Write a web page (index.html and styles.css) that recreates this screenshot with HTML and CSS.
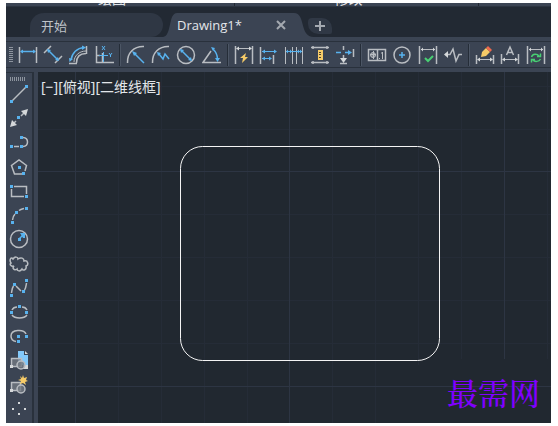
FILE: index.html
```html
<!DOCTYPE html>
<html lang="zh-CN">
<head>
<meta charset="utf-8">
<title>Drawing1</title>
<link rel="stylesheet" href="styles.css">
</head>
<body>
<div class="app">
  <div class="ribbon"><span class="panel first">绘图</span><span class="panel">修改</span><span class="panel last"></span></div>
  <nav class="tabs">
    <button class="tab start">开始</button>
    <div class="tab active">
      <svg class="edge left" viewBox="0 0 14 30"><path d="M0 30C9 29 5 6 14 6V30Z"/></svg>
      <button class="title">Drawing1*</button>
      <button class="close" aria-label="关闭"><svg viewBox="0 0 10 10"><path d="M1 1L9 9M9 1L1 9"/></svg></button>
      <svg class="edge right" viewBox="0 0 20 30"><path d="M0 6C12 6 5 30 20 30H0Z"/></svg>
    </div>
    <button class="add" aria-label="新建"><svg viewBox="0 0 10 10"><path d="M5 0V10M0 5H10"/></svg></button>
  </nav>
  <div class="toolbar">
    <i class="grip"></i>
    <div class="tools">
      <button aria-label="线性"><svg viewBox="0 0 20 20"><path d="M1.500 2V18M18.500 2V18"/><path class="b" d="M3 6.500H17"/><path class="bf" d="M2 6.500L5 4.500V8.500ZM18 6.500L15 4.500V8.500Z"/></svg></button>
      <button aria-label="对齐"><svg viewBox="0 0 20 20"><path d="M1 8L8 1M12 18L19 11"/><path class="b" d="M5 5L15 15"/><path class="bf" d="M4 4L8 5L5 8ZM16 16L12 15L15 12Z"/></svg></button>
      <button aria-label="弧长"><svg viewBox="0 0 20 20"><path d="M18.500 1V9M1 18.500H9M8.500 18C8.500 12 12 8.500 18 8.500"/><path class="thin" d="M6 17C6 11 11 6 18 6"/><path class="b" d="M3 15C4 8 9 3 16 2.500"/><path class="bf" d="M1.500 17L1 13L5 14ZM18 2.500L14 .5V5Z"/></svg></button>
      <button aria-label="坐标"><svg viewBox="0 0 20 20"><path d="M2.500 1V17.500H20M8.500 8V18M2 10.500H6"/><path class="b thin" d="M9.500 7V17M5 10.500H14M8 1L11 5M11 1L8 5M15 8L16.500 10L18 8M16.500 10V12"/></svg></button>
      <i class="sep"></i>
      <button aria-label="半径"><svg viewBox="0 0 20 20"><path d="M18 1.500C8 1 1 8 1.500 18"/><path class="b" d="M9 9L18 18"/><path class="bf" d="M6 6L11 8L8 11Z"/></svg></button>
      <button aria-label="折弯"><svg viewBox="0 0 20 20"><path d="M18 1.500C8 1 1 8 1.500 18"/><path class="b" d="M8 9L12 14L14 9L18 14"/><path class="bf" d="M6 7L10 8L7 11Z"/></svg></button>
      <button aria-label="直径"><svg viewBox="0 0 20 20"><circle cx="10" cy="10" r="8.500"/><path class="b" d="M5 5L15 15"/><path class="bf" d="M4 4L8 5L5 8ZM16 16L12 15L15 12Z"/></svg></button>
      <button aria-label="角度"><svg viewBox="0 0 20 20"><path d="M9 6L1 17.500H19"/><path class="b" d="M11 4C14 7 15.500 10 15.500 14"/><path class="bf" d="M9 2L13 3L11 6ZM15.500 17L13 13H18Z"/></svg></button>
      <i class="sep"></i>
      <button aria-label="快速标注"><svg viewBox="0 0 20 20"><path d="M1.500 1V19M18.500 1V19"/><path class="thin" d="M3 3.500H17"/><path class="w" d="M2 3.500L5 1.500V5.500ZM18 3.500L15 1.500V5.500Z"/><path class="y" d="M12 8L6 13H9L8 18L14 12H11Z"/></svg></button>
      <button aria-label="基线"><svg viewBox="0 0 20 20"><path d="M1.500 2V19M14.500 10V19"/><path class="b thin" d="M3 6.500H17M3 13.500H12"/><path class="bf" d="M3 6.500L6 4.500V8.500ZM18 6.500L15 4.500V8.500ZM3 13.500L6 11.500V15.500ZM13 13.500L10 11.500V15.500Z"/></svg></button>
      <button aria-label="连续"><svg viewBox="0 0 20 20"><path class="thin" d="M1.500 2V19M8.500 2V19M12.500 2V19M18.500 2V19"/><path class="b thin" d="M2 6.500H18"/><path class="bf" d="M2 6.500L4 4.500V8.500ZM8 6.500L6 4.500V8.500ZM13 6.500L15 4.500V8.500ZM18 6.500L16 4.500V8.500Z"/></svg></button>
      <button aria-label="等距"><svg viewBox="0 0 20 20"><path d="M1 2.500H19M1 17.500H19M3 1V4M17 1V4M3 16V19M17 16V19"/><path class="y" d="M8 5H13V15H8Z"/><path class="k" d="M9 7.500H11M9 9.500H11M9 12.500H11"/></svg></button>
      <button aria-label="打断"><svg viewBox="0 0 20 20"><path d="M8.500 1V5M8.500 10V15M5 18.500H12M18.500 4V12"/><path class="w" d="M8.500 18L5 13H12Z"/><path class="b" d="M1 7.500H6M10 7.500H15"/><path class="bf" d="M17 7.500L13 5V10Z"/></svg></button>
      <i class="sep"></i>
      <button aria-label="公差"><svg viewBox="0 0 20 20"><path d="M1.500 4.500H18.500V15.500H1.500ZM10.500 5V15"/><path class="thin" d="M3 9.500H9M6.500 6V14M12.500 13V14M15.500 7V14M14 8H15"/><circle class="dot" cx="6" cy="10" r="2.500"/></svg></button>
      <button aria-label="圆心"><svg viewBox="0 0 20 20"><circle cx="10" cy="10" r="8"/><path class="b" d="M10 7V13M7 10H13"/></svg></button>
      <button aria-label="检验"><svg viewBox="0 0 20 20"><path d="M1.500 1V19M18.500 1V19"/><path class="thin" d="M3 4.500H17"/><path class="w" d="M3 4.500L5 2.500V6.500ZM17 4.500L15 2.500V6.500Z"/><path class="g" d="M7 13L10 16L15 11"/></svg></button>
      <button aria-label="折弯线性"><svg viewBox="0 0 20 20"><path d="M3 9.500H7L10 4L13 16L16 9.500H19"/><path class="w" d="M1 9.500L5 6V13Z"/></svg></button>
      <i class="sep"></i>
      <button aria-label="编辑标注"><svg viewBox="0 0 20 20"><path d="M1.500 10V19M18.500 10V19"/><path class="thin" d="M3 14.500H17"/><path class="w" d="M2 14.500L5 12.500V16.500ZM18 14.500L15 12.500V16.500Z"/><path class="y" d="M6 12L7 7L11 3L15 7L11 11Z"/><path class="r" d="M11 3L13 1L17 5L15 7Z"/></svg></button>
      <button aria-label="编辑文字"><svg viewBox="0 0 20 20"><path d="M1.500 9V19M18.500 9V19M6.500 10L10 2L13.500 10M8 7.500H12"/><path class="thin" d="M3 14.500H17"/><path class="w" d="M2 14.500L5 12.500V16.500ZM18 14.500L15 12.500V16.500Z"/></svg></button>
      <button aria-label="更新标注"><svg viewBox="0 0 20 20"><path d="M1.500 1V19M18.500 1V19"/><path class="thin" d="M3 4.500H17"/><path class="w" d="M3 4.500L5 2.500V6.500ZM17 4.500L15 2.500V6.500Z"/><path class="g fine" d="M5.500 12C6.500 8.500 11 8.500 13 11M14.500 8.500V11.500H11M14.500 14C13 17 8.500 17 7 15M5.500 17.500V14.500H9"/></svg></button>
    </div>
  </div>
  <main class="work">
    <aside class="side">
      <i class="grip wide"></i>
      <div class="draw">
        <button aria-label="直线"><svg viewBox="0 0 20 20"><path d="M3 17L17 3"/><path class="bf" d="M1 16h3v3H1ZM16 1h3v3h-3Z"/></svg></button>
        <button aria-label="构造线"><svg viewBox="0 0 20 20"><path d="M3 17L7 13M12 8L17 3"/><path class="w" d="M1 19L3 12L8 17ZM19 1L12 3L17 8Z"/><path class="bf" d="M8 8h3v3H8Z"/></svg></button>
        <button aria-label="多段线"><svg viewBox="0 0 20 20"><path d="M5 14.500H10M14 5.500C20 6 20 14 14 14.500"/><path class="bf" d="M1 13h3v3H1ZM11 13h3v3h-3ZM11 4h3v3h-3Z"/></svg></button>
        <button aria-label="多边形"><svg viewBox="0 0 20 20"><path d="M13 17H5.500L2.500 8.500L10 3L17.500 8.500L16 14"/><path class="bf" d="M9 9h3v3H9ZM13 15h3v3h-3Z"/></svg></button>
        <button aria-label="矩形"><svg viewBox="0 0 20 20"><path d="M5 5.500H17.500V13M15 15.500H2.500V8"/><path class="bf" d="M1 4h3v3H1ZM16 14h3v3h-3Z"/></svg></button>
        <button aria-label="圆弧"><svg viewBox="0 0 20 20"><path d="M3.500 15C4 12 5 10 6 9M10 5.500C12 4 13 4 15 3.500"/><path class="bf" d="M2 16h3v3H2ZM6 6h3v3H6ZM16 2h3v3h-3Z"/></svg></button>
        <button aria-label="圆"><svg viewBox="0 0 20 20"><circle cx="10" cy="10" r="8.500"/><path class="b" d="M10 10L14 6"/><path class="bf" d="M9 9h3v3H9ZM11 4h5v5h-2Z"/></svg></button>
        <button aria-label="修订云线"><svg viewBox="0 0 20 20"><path d="M2 9C0 6 2 2 4 5C6 2 9 3 9 5C12 3 15 4 15 7C19 6 20 11 17 12C18 16 14 17 13 15C11 18 8 17 8 15C5 17 3 14 5 12C2 13 0 10 2 9Z"/></svg></button>
        <button aria-label="样条曲线"><svg viewBox="0 0 20 20"><path d="M2.500 15C3 12 3 10 4.500 8M7 8L12 13M15.500 12C17 10 17 8 17.500 5"/><path class="bf" d="M1 16h3v3H1ZM4 5h3v3H4ZM13 12h3v3h-3ZM16 1h3v3h-3Z"/></svg></button>
        <button aria-label="椭圆"><svg viewBox="0 0 20 20"><path d="M3 8C4 6 6 5 8 5M13 5C15 5 17 6 18 8M3 13C6 17 15 17 18 13"/><path class="bf" d="M9 3h3v3H9ZM1 9h3v3H1ZM16 9h3v3h-3Z"/></svg></button>
        <button aria-label="椭圆弧"><svg viewBox="0 0 20 20"><path d="M17 8C15 3 2 3 2 10C2 13 4 15 7 15.500"/><path class="bf" d="M8 9h3v3H8ZM16 9h3v3h-3ZM8 14h3v3H8Z"/></svg></button>
        <button aria-label="插入块"><svg viewBox="0 0 20 20"><path class="w" d="M14 12H19V19H14Z"/><path class="sky" d="M9 1H15V5H19V15H9Z"/><path class="w" d="M16 1L19 4H16Z"/><path class="dim" d="M2.500 8.500H12.500V16.500H2.500Z"/><circle class="dim" cx="12" cy="15" r="4"/><path class="w" d="M1 15h3v3H1Z"/></svg></button>
        <button aria-label="创建块"><svg viewBox="0 0 20 20"><path class="dim" d="M2.500 7.500H11.500V15.500H2.500Z"/><circle class="dim" cx="12" cy="14" r="4"/><path class="w" d="M1 14h3v3H1Z"/><path class="y" d="M14 0L15 3L18 2L17 5L19 6L16 7L17 10L14 8L11 9L12 6L9 5L12 4L11 1L13 3Z"/></svg></button>
        <button aria-label="点"><svg viewBox="0 0 20 20"><path class="w" d="M9 3h2v2H9ZM3 9h2v2H3ZM15 9h2v2h-2ZM9 14h2v2H9Z"/></svg></button>
      </div>
    </aside>
    <section class="canvas">
      <svg class="drawing" viewBox="0 0 513 351">
        <path class="minor" d="M80.500 0V351M123.500 0V351M166.500 0V351M209.500 0V351M294.500 0V351M337.500 0V351M380.500 0V293M423.500 0V287M509.500 0V287M0 14.500H513M0 57.500H513M0 142.500H513M0 185.500H513M0 228.500H513M0 271.500H513"/>
        <path class="major" d="M37.500 0V351M251.500 0V351M466.500 0V287M0 99.500H513M0 314.500H513"/>
        <rect class="shape" x="142.500" y="74.500" width="259" height="214" rx="22"/>
      </svg>
      <div class="view">[−][俯视][二维线框]</div>
      <div class="mark">最需网</div>
    </section>
  </main>
</div>
</body>
</html>
```
FILE: styles.css
```css
* { box-sizing: border-box; }
body {
  margin: 0;
  height: 100vh;
  padding: 3px 7px 3px 6px;
  background: #fff;
  font-family: "Noto Sans", "Noto Sans CJK SC", sans-serif;
  color: #e3e6ea;
}
.app { display: flex; flex-direction: column; height: 100%; overflow: hidden; background: #3b4453; }
button { display: block; margin: 0; padding: 0; border: 0; background: none; color: inherit; font: inherit; }
svg { display: block; fill: none; stroke: #b9bdc2; }

.ribbon { display: flex; height: 4px; overflow: hidden; border-bottom: 1px solid #2c3440; }
.panel { display: flex; align-items: flex-end; justify-content: center; flex: 250; height: 4px; padding-right: 16px; font-size: 14px; line-height: 16px; border-right: 1px solid #222933; }
.panel.first { flex: 234; }
.panel.last { flex: 62; border: 0; }

.tabs { display: flex; flex: none; height: 30px; background: #222933; }
.tab { font-size: 13px; }
.start { width: 133px; height: 24px; margin: 6px 0 0 24px; padding-left: 11px; text-align: left; background: #2f3744; color: #bfc3c9; border-radius: 14px 12px 12px 0; }
.active { display: flex; align-items: center; }
.title { height: 24px; margin-top: 6px; padding-right: 34px; background: #3b4453; font-family: "Open Sans", sans-serif; }
.close { height: 24px; margin-top: 6px; padding-right: 8px; background: #3b4453; }
.close svg, .add svg { width: 10px; height: 10px; stroke: #a4a9b0; stroke-width: 2; }
.edge { height: 30px; fill: #3b4453; stroke: none; }
.edge.left { width: 14px; }
.edge.right { width: 20px; }
.add { display: grid; place-items: center; width: 24px; height: 16px; margin: 11px 0 0 -6px; background: #303845; border-radius: 4px 10px 2px 10px; }

.toolbar { display: flex; align-items: center; flex: none; height: 27px; margin-top: 4px; padding: 0 5px 0 3px; border: 1px solid #29313c; border-width: 1px 0; }
.grip { width: 4px; height: 16px; margin-right: 5px; background: repeating-linear-gradient(#8d949e 0 1px, #3b4453 1px 2px); }
.tools { display: flex; flex: 1; align-items: center; justify-content: space-between; }
.tools svg, .draw svg { width: 20px; height: 20px; stroke-width: 1.5; }
.sep { width: 2px; height: 22px; background: #252d38; border-right: 1px solid #4c5665; }

.b { stroke: #58b2ee; }
.bf { fill: #58b2ee; stroke: none; }
.w { fill: #d5d8da; stroke: none; }
.y { fill: #f6cb68; stroke: none; }
.r { fill: #ed684d; stroke: none; }
.g { stroke: #48cf73; stroke-width: 2; }
.fine { stroke-width: 1.5; }
.thin, .k { stroke-width: 1; }
.dot { fill: #b9bdc2; fill-opacity: .5; stroke-width: 1; }
.k { stroke: #4a4330; }
.sky { fill: #83c9fa; stroke: none; }
.dim { fill: #737982; fill-opacity: .8; stroke: #b9bdc2; }

.work { display: flex; flex: 1; min-height: 0; padding-top: 4px; }
.side { display: flex; flex-direction: column; width: 28px; margin-right: 4px; padding: 4px 0 4px 3px; border: 1px solid #29313c; border-width: 1px 2px 0 0; }
.grip.wide { width: 16px; height: 4px; margin: 0 0 3px 1px; background: repeating-linear-gradient(90deg, #8d949e 0 1px, #3b4453 1px 2px); }
.draw { display: flex; flex: 1; flex-direction: column; justify-content: space-between; }

.canvas { position: relative; flex: 1; overflow: hidden; background: #212830; }
.drawing { width: 513px; height: 351px; }
.minor { stroke: #252c37; }
.major { stroke: #2d3543; }
.shape { stroke: #f4f4f4; }
.view { position: absolute; top: 5px; left: 3px; font-size: 14px; line-height: 20px; }
.mark { position: absolute; right: 11px; bottom: 9px; font-family: "Noto Serif CJK SC", "Noto Sans CJK SC", serif; font-weight: 500; font-size: 31px; line-height: 44px; color: #8000ff; }
```
